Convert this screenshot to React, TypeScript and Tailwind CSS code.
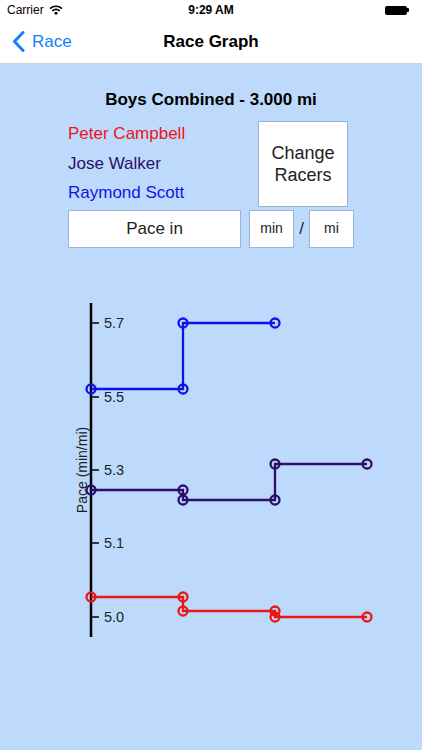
import React from "react";

type Pt = [number, number];

const series: { color: string; pts: Pt[] }[] = [
  { color: "#1212e8", pts: [[91, 389], [183, 389], [183, 323], [275, 323]] },
  { color: "#2c0f6a", pts: [[91, 490], [183, 490], [183, 500], [275, 500], [275, 464], [367, 464]] },
  { color: "#ee1515", pts: [[91, 597], [183, 597], [183, 611], [275, 611], [275, 617], [367, 617]] },
];

const ticks = [
  { y: 323, label: "5.7" },
  { y: 397, label: "5.5" },
  { y: 470, label: "5.3" },
  { y: 543, label: "5.1" },
  { y: 617, label: "5.0" },
];

function StatusBar() {
  return (
    <div className="relative flex h-5 items-center bg-white px-[7px] text-[12px] text-black">
      <span>Carrier</span>
      <svg width="14" height="10" viewBox="0 0 14 10" className="ml-[5px]">
        <path d="M1 3.6 A9 9 0 0 1 13 3.6" stroke="black" strokeWidth="1.6" fill="none" />
        <path d="M3.2 5.9 A6 6 0 0 1 10.8 5.9" stroke="black" strokeWidth="1.6" fill="none" />
        <path d="M5 8 L7 10 L9 8 A3 3 0 0 0 5 8 Z" fill="black" />
      </svg>
      <span className="absolute left-1/2 -translate-x-1/2 font-semibold">9:29 AM</span>
      <div className="ml-auto mr-[6px] flex items-center">
        <div className="h-[9px] w-[22px] rounded-[2px] bg-black" />
        <div className="h-[4px] w-[2px] rounded-r-[1px] bg-black" />
      </div>
    </div>
  );
}

function NavBar() {
  return (
    <div className="relative flex h-11 items-center border-b border-[#c8d0dc] bg-white">
      <div className="flex items-center pl-[12px] text-[#157efb]">
        <svg width="13" height="21" viewBox="0 0 13 21">
          <path d="M11 1.5 L2.5 10.5 L11 19.5" stroke="#157efb" strokeWidth="3" fill="none" strokeLinecap="round" strokeLinejoin="round" />
        </svg>
        <span className="ml-[7px] text-[17px]">Race</span>
      </div>
      <span className="absolute left-1/2 -translate-x-1/2 text-[17px] font-semibold text-black">Race Graph</span>
    </div>
  );
}

function Chart() {
  return (
    <svg width="422" height="360" viewBox="0 290 422 360" className="block">
      <line x1="91" y1="303" x2="91" y2="637" stroke="black" strokeWidth="2.5" />
      {ticks.map((t) => (
        <g key={t.label}>
          <line x1="91" y1={t.y} x2="99" y2={t.y} stroke="black" strokeWidth="1.5" />
          <text x="104" y={t.y + 5} fontSize="14.5" fill="#222" fontFamily="'Liberation Sans', Arial, sans-serif">
            {t.label}
          </text>
        </g>
      ))}
      <text
        x="0"
        y="0"
        fontSize="14"
        fill="#222"
        textAnchor="middle"
        fontFamily="'Liberation Sans', Arial, sans-serif"
        transform="translate(87 470) rotate(-90)"
      >
        Pace (min/mi)
      </text>
      {series.map((s, i) => (
        <g key={i}>
          <polyline
            points={s.pts.map((p) => p.join(",")).join(" ")}
            fill="none"
            stroke={s.color}
            strokeWidth="2.3"
          />
          {s.pts.map((p, j) => (
            <circle key={j} cx={p[0]} cy={p[1]} r="4.5" fill="none" stroke={s.color} strokeWidth="2.3" />
          ))}
        </g>
      ))}
    </svg>
  );
}

export default function App() {
  return (
    <div className="flex h-[750px] w-[422px] flex-col overflow-hidden bg-white font-['Liberation_Sans',Arial,sans-serif]">
      <StatusBar />
      <NavBar />
      <div className="flex-1 bg-[#bddafc]">
        <div className="pt-[26px] text-center text-[17px] font-semibold leading-5 text-black">
          Boys Combined - 3.000 mi
        </div>
        <div className="mt-[11px] flex pl-[68px]">
          <div className="-mt-[2px] flex w-[190px] flex-col text-[17px] leading-[29.5px]">
            <span className="text-[#ee1515]">Peter Campbell</span>
            <span className="text-[#2c0f6a]">Jose Walker</span>
            <span className="text-[#1212e8]">Raymond Scott</span>
          </div>
          <div className="flex h-[86px] w-[90px] items-center justify-center border border-[#9db5d4] bg-white text-center text-[18px] leading-[22px] text-[#222]">
            Change
            <br />
            Racers
          </div>
        </div>
        <div className="mt-[2px] flex items-center pl-[68px]">
          <div className="flex h-[38px] w-[173px] items-center justify-center border border-[#9db5d4] bg-white text-[17px] text-[#222]">
            Pace in
          </div>
          <div className="ml-[8px] flex h-[38px] w-[45px] items-center justify-center border border-[#9db5d4] bg-white text-[14px] text-[#222]">
            min
          </div>
          <span className="w-[15px] text-center text-[17px] text-[#222]">/</span>
          <div className="flex h-[38px] w-[45px] items-center justify-center border border-[#9db5d4] bg-white text-[14px] text-[#222]">
            mi
          </div>
        </div>
        <div className="mt-[42px]">
          <Chart />
        </div>
      </div>
    </div>
  );
}
